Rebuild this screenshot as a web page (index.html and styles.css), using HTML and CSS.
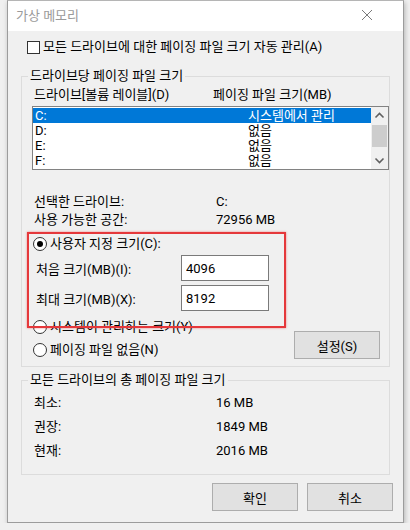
FILE: index.html
```html
<!DOCTYPE html>
<html lang="ko">
<head>
    <meta charset="UTF-8">
    <meta name="viewport" content="width=device-width, initial-scale=1.0">
    <title>가상 메모리</title>
    <link rel="stylesheet" href="styles.css">
</head>
<body>
    <div class="window">
        <div class="titlebar">
            <span class="title">가상 메모리</span>
            <svg class="close" width="12" height="12" viewBox="0 0 12 12">
                <path d="M1 1 L11 11 M11 1 L1 11" stroke="#7a7a7a" stroke-width="1" fill="none"/>
            </svg>
        </div>
        <div class="content">
            <div class="check-row"><span class="checkbox"></span>모든 드라이브에 대한 페이징 파일 크기 자동 관리(A)</div>

            <fieldset class="group group-drive">
                <legend>드라이브당 페이징 파일 크기</legend>
                <div class="list-head"><span class="head-drive">드라이브[볼륨 레이블](D)</span><span>페이징 파일 크기(MB)</span></div>
                <div class="listbox">
                    <div class="rows">
                        <div class="row selected"><span class="drive">C:</span><span>시스템에서 관리</span></div>
                        <div class="row"><span class="drive">D:</span><span>없음</span></div>
                        <div class="row"><span class="drive">E:</span><span>없음</span></div>
                        <div class="row"><span class="drive">F:</span><span>없음</span></div>
                    </div>
                    <div class="scrollbar">
                        <svg class="arrow" width="17" height="17" viewBox="0 0 17 17">
                            <path d="M4.5 10.5 L8.5 6.5 L12.5 10.5" stroke="#606060" stroke-width="1.6" fill="none"/>
                        </svg>
                        <div class="thumb"></div>
                        <div class="track"></div>
                        <svg class="arrow" width="17" height="17" viewBox="0 0 17 17">
                            <path d="M4.5 6.5 L8.5 10.5 L12.5 6.5" stroke="#606060" stroke-width="1.6" fill="none"/>
                        </svg>
                    </div>
                </div>

                <div class="info">
                    <div class="info-row"><span class="lbl">선택한 드라이브:</span><span>C:</span></div>
                    <div class="info-row"><span class="lbl">사용 가능한 공간:</span><span>72956 MB</span></div>
                </div>

                <div class="custom">
                    <div class="radio-row"><span class="radio checked"></span>사용자 지정 크기(C):</div>
                    <div class="size-row"><span class="size-lbl">처음 크기(MB)(I):</span><input class="size-input" type="text" value="4096"></div>
                    <div class="size-row"><span class="size-lbl">최대 크기(MB)(X):</span><input class="size-input" type="text" value="8192"></div>
                </div>

                <div class="bottom-opts">
                    <div class="opts">
                        <div class="radio-row"><span class="radio"></span>시스템이 관리하는 크기(Y)</div>
                        <div class="radio-row"><span class="radio"></span>페이징 파일 없음(N)</div>
                    </div>
                    <button class="btn btn-set">설정(S)</button>
                </div>
            </fieldset>

            <fieldset class="group group-total">
                <legend>모든 드라이브의 총 페이징 파일 크기</legend>
                <div class="total-row"><span class="lbl">최소:</span><span>16 MB</span></div>
                <div class="total-row"><span class="lbl">권장:</span><span>1849 MB</span></div>
                <div class="total-row"><span class="lbl">현재:</span><span>2016 MB</span></div>
            </fieldset>

            <div class="actions">
                <button class="btn">확인</button>
                <button class="btn">취소</button>
            </div>
        </div>
        <div class="highlight"></div>
    </div>
</body>
</html>
```

FILE: styles.css
```css
body {
    margin: 0;
    padding: 0;
    background: #f0f0f0;
    font-family: Roboto, "Noto Sans CJK KR", sans-serif;
    font-size: 13px;
    color: #000;
}
.window {
    position: relative;
    margin-left: 7px;
    width: 395px;
    height: 521px;
    border: 1px solid #9c9c9c;
    border-top-color: #b5b5b5;
    background: #f0f0f0;
    box-shadow: 1px 2px 5px rgba(0, 0, 0, 0.25);
}
.titlebar {
    height: 30px;
    background: #fff;
    display: flex;
    align-items: center;
    justify-content: space-between;
    padding: 0 30px 0 8px;
}
.title {
    color: #9a9a9a;
    line-height: 14px;
    margin-top: -1px;
}
.close {
    margin-top: -2px;
}
.content {
    padding: 0 13px;
}
.check-row {
    display: flex;
    align-items: center;
    margin-top: 9px;
    margin-left: 6px;
    line-height: 14px;
}
.checkbox {
    width: 11px;
    height: 11px;
    border: 1px solid #333;
    background: #fff;
    margin-right: 3px;
}
.group {
    margin: 15px 0 0;
    padding: 0 0 7px 11px;
    border: 1px solid #dcdcdc;
    min-width: 0;
}
.group legend {
    margin-left: -5px;
    padding: 0 2px;
    line-height: 14px;
}
.list-head {
    margin-top: 5px;
    line-height: 14px;
    padding-left: 1px;
}
.head-drive {
    display: inline-block;
    width: 179px;
}
.listbox {
    display: flex;
    margin: 4px 0 0 -1px;
    width: 355px;
    height: 62px;
    border: 1px solid #828282;
    background: #fff;
}
.rows {
    flex: 1;
    padding-top: 1px;
}
.row {
    height: 15px;
    line-height: 15px;
    padding-left: 2px;
}
.row.selected {
    background: #0078d7;
    color: #fff;
}
.drive {
    display: inline-block;
    width: 213px;
}
.scrollbar {
    width: 17px;
    display: flex;
    flex-direction: column;
    background: #f0f0f0;
}
.arrow {
    display: block;
}
.thumb {
    height: 22px;
    margin: 1px 1px 0 1px;
    background: #cdcdcd;
}
.track {
    flex: 1;
}
.info {
    margin-top: 23px;
}
.info-row {
    line-height: 18px;
    padding-left: 1px;
}
.info-row .lbl {
    display: inline-block;
    width: 182px;
}
.custom {
    margin-top: 8px;
}
.radio-row {
    display: flex;
    align-items: center;
    line-height: 14px;
}
.radio {
    position: relative;
    width: 12px;
    height: 12px;
    border: 1px solid #333;
    border-radius: 50%;
    background: #fff;
    margin-right: 3px;
}
.radio.checked::after {
    content: "";
    position: absolute;
    left: 3px;
    top: 3px;
    width: 6px;
    height: 6px;
    border-radius: 50%;
    background: #000;
}
.size-row {
    display: flex;
    align-items: center;
    margin-top: 4px;
}
.size-row:first-of-type {
    margin-top: 11px;
}
.size-lbl {
    width: 145px;
    padding-left: 3px;
}
.size-input {
    box-sizing: border-box;
    width: 88px;
    height: 26px;
    margin: 0;
    border: 1px solid #7a7a7a;
    padding: 0 4px;
    font-family: inherit;
    font-size: 13px;
    background: #fff;
    outline: none;
}
.bottom-opts {
    display: flex;
    justify-content: space-between;
    margin-top: 9px;
    padding-right: 9px;
}
.opts {
    display: flex;
    flex-direction: column;
    gap: 9px;
}
.btn {
    box-sizing: border-box;
    width: 86px;
    height: 28px;
    margin: 0;
    background: #e1e1e1;
    border: 1px solid #adadad;
    font-family: inherit;
    font-size: 13px;
    color: #000;
    padding: 0;
}
.btn-set {
    margin-top: 11px;
}
.group-total {
    margin-top: 6px;
    padding-bottom: 11px;
}
.total-row {
    line-height: 24px;
    padding-left: 1px;
}
.total-row:first-of-type {
    margin-top: 4px;
}
.total-row .lbl {
    display: inline-block;
    width: 182px;
}
.actions {
    display: flex;
    justify-content: flex-end;
    gap: 9px;
    margin: 8px -3px 0 0;
}
.highlight {
    position: absolute;
    left: 19px;
    top: 231px;
    width: 255px;
    height: 92px;
    border: 2px solid #e5383b;
    box-shadow: 0 0 2px rgba(229, 56, 59, 0.6);
    pointer-events: none;
}
```
